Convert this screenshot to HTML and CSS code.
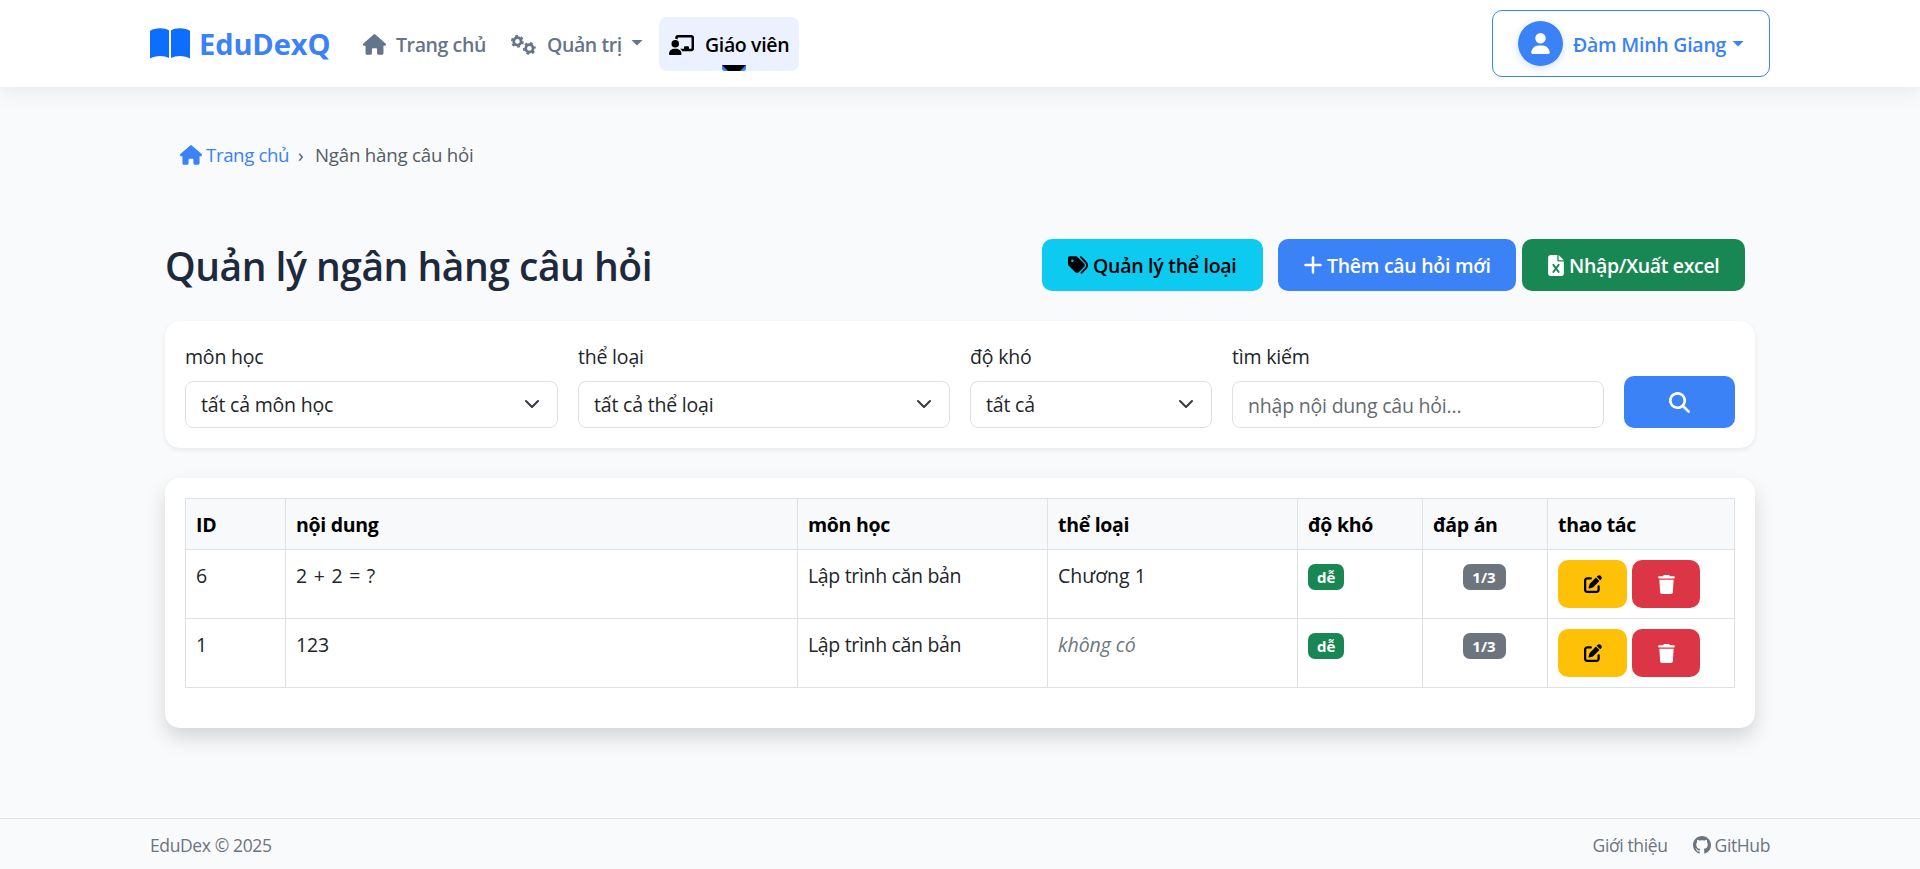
FILE: index.html
```
<!DOCTYPE html>
<html lang="vi">
<head>
<meta charset="utf-8">
<title>EduDexQ</title>
<link rel="stylesheet" href="styles.css">
</head>
<body>
<svg class="defs" aria-hidden="true">
  <symbol id="house" viewBox="0 0 576 512"><path d="M575.8 255.5c0 18-15 32.1-32 32.1h-32l.7 160.2c0 2.7-.2 5.4-.5 8.1V472c0 22.1-17.9 40-40 40H456c-1.1 0-2.2 0-3.3-.1c-1.4 .1-2.8 .1-4.2 .1H416 392c-22.1 0-40-17.9-40-40V448 384c0-17.7-14.3-32-32-32H256c-17.7 0-32 14.3-32 32v64 24c0 22.1-17.9 40-40 40H160 128.1c-1.5 0-3-.1-4.5-.2c-1.2 .1-2.4 .2-3.6 .2H104c-22.1 0-40-17.9-40-40V360c0-.9 0-1.9 .1-2.8V287.6H32c-18 0-32-14-32-32.1c0-9 3-17 10-24L266.4 8c7-7 15-8 22-8s15 2 21 7L564.8 231.5c8 7 12 15 11 24z"/></symbol>
  <symbol id="pen" viewBox="0 0 512 512"><path d="M471.6 21.7c-21.9-21.9-57.3-21.9-79.2 0L362.3 51.7l97.9 97.9 30.1-30.1c21.9-21.9 21.9-57.3 0-79.2L471.6 21.7zm-299.2 220c-6.1 6.1-10.8 13.6-13.5 21.9l-29.6 88.8c-2.9 8.6-.6 18.1 5.8 24.6s15.9 8.7 24.6 5.8l88.8-29.6c8.2-2.7 15.7-7.4 21.9-13.5L437.7 172.3 339.7 74.3 172.4 241.7zM96 64C43 64 0 107 0 160V416c0 53 43 96 96 96H352c53 0 96-43 96-96V320c0-17.7-14.3-32-32-32s-32 14.3-32 32v96c0 17.7-14.3 32-32 32H96c-17.7 0-32-14.3-32-32V160c0-17.7 14.3-32 32-32h96c17.7 0 32-14.3 32-32s-14.3-32-32-32H96z"/></symbol>
  <symbol id="trash" viewBox="0 0 448 512"><path d="M135.2 17.7L128 32H32C14.3 32 0 46.3 0 64S14.3 96 32 96H416c17.7 0 32-14.3 32-32s-14.3-32-32-32H320l-7.2-14.3C307.4 6.8 296.3 0 284.2 0H163.8c-12.1 0-23.2 6.8-28.6 17.7zM416 128H32L53.2 467c1.6 25.3 22.6 45 47.9 45H346.9c25.3 0 46.3-19.7 47.9-45L416 128z"/></symbol>
</svg>

<header class="navbar">
  <div class="container navbar-row">
    <a class="brand">
      <svg class="brand-icon" viewBox="0 0 40 31"><path d="M0 3C4-.6 15-.8 19 2.5V30C14 27 5 27.200 0 30.500ZM21 2.500C25-.8 36-.6 40 3V30.500C35 27.200 26 27 21 30Z"/></svg>
      <span>EduDexQ</span>
    </a>
    <nav class="nav">
      <a class="nav-link"><svg class="ico ico-house"><use href="#house"/></svg><span class="w-home">Trang chủ</span></a>
      <a class="nav-link nav-admin">
        <svg class="ico-gears" viewBox="0 0 25 20">
          <g fill="none" stroke="currentColor"><circle cx="6.400" cy="6.400" r="3.700" stroke-width="2.700"/><circle cx="6.400" cy="6.400" r="5.600" stroke-width="1.700" stroke-dasharray="2.900 2.960"/><circle cx="18.400" cy="13.400" r="3.700" stroke-width="2.700"/><circle cx="18.400" cy="13.400" r="5.600" stroke-width="1.700" stroke-dasharray="2.900 2.960" stroke-dashoffset="2.900"/></g>
        </svg>
        <span class="w-admin">Quản trị</span><i class="caret"></i>
      </a>
      <a class="nav-link active">
        <svg class="ico-board" viewBox="0 0 640 512"><path d="M160 64c0-35.300 28.700-64 64-64H576c35.300 0 64 28.700 64 64V352c0 35.300-28.700 64-64 64H336.800c-11.800-25.500-29.900-47.500-52.400-64H384V320c0-17.700 14.300-32 32-32h64c17.700 0 32 14.300 32 32v32h64V64L224 64v49.100C205.200 102.200 183.300 96 160 96V64zm0 64a96 96 0 1 1 0 192 96 96 0 1 1 0-192zM133.300 352h53.300C260.300 352 320 411.700 320 485.300c0 14.700-11.900 26.700-26.700 26.700H26.700C11.900 512 0 500.100 0 485.300C0 411.700 59.700 352 133.300 352z"/></svg>
        <span>Giáo viên</span>
        <svg class="marker" viewBox="0 0 24 6"><path class="marker-bar" d="M0 0H24V3A3 3 0 0 1 21 6H3A3 3 0 0 1 0 3Z"/><path d="M0 0H24L18 6H6Z"/></svg>
      </a>
    </nav>
    <button class="user">
      <span class="avatar"><svg viewBox="0 0 448 512"><path d="M224 256A128 128 0 1 0 224 0a128 128 0 1 0 0 256zm-45.700 48C79.800 304 0 383.800 0 482.300C0 498.700 13.300 512 29.700 512H418.300c16.400 0 29.700-13.300 29.700-29.700C448 383.800 368.200 304 269.700 304H178.300z"/></svg></span>
      <span>Đàm Minh Giang</span><i class="caret"></i>
    </button>
  </div>
</header>

<main class="container main">
  <nav class="breadcrumb">
    <a><svg class="ico"><use href="#house"/></svg><span class="crumb-home">Trang chủ</span></a>
    <span class="sep">›</span>
    <span>Ngân hàng câu hỏi</span>
  </nav>

  <div class="heading">
    <h1>Quản lý ngân hàng câu hỏi</h1>
    <div class="actions">
      <button class="btn btn-info">
        <svg class="ico-tags" viewBox="0 0 512 512"><path d="M345 39.100L472.800 168.400c52.400 53 52.400 138.200 0 191.200L360.800 472.900c-9.300 9.400-24.500 9.500-33.900 .2s-9.500-24.500-.2-33.900L438.600 325.900c33.900-34.300 33.900-89.400 0-123.700L310.900 72.900c-9.300-9.400-9.200-24.600 .2-33.900s24.600-9.200 33.900 .2zM0 229.500V80C0 53.500 21.500 32 48 32H197.500c17 0 33.300 6.700 45.300 18.700l168 168c25 25 25 65.500 0 90.500L277.300 442.700c-25 25-65.500 25-90.500 0l-168-168C6.700 262.700 0 246.500 0 229.500zM144 144a32 32 0 1 0-64 0 32 32 0 1 0 64 0z"/></svg>
        <span>Quản lý thể loại</span></button>
      <button class="btn btn-primary">
        <svg class="ico-plus" viewBox="0 0 18 18"><path d="M9 1.500V16.500M1.500 9H16.500"/></svg>
        <span>Thêm câu hỏi mới</span></button>
      <button class="btn btn-success">
        <svg class="ico-excel" viewBox="0 0 384 512"><path d="M64 0C28.700 0 0 28.700 0 64V448c0 35.300 28.700 64 64 64H320c35.300 0 64-28.700 64-64V160H256c-17.700 0-32-14.300-32-32V0H64zM256 0V128H384L256 0z"/><path class="excel-cross" d="M128 240L256 416M256 240L128 416"/></svg>
        <span>Nhập/Xuất excel</span></button>
    </div>
  </div>

  <form class="card filters">
    <label class="field"><span>môn học</span><span class="control">tất cả môn học<svg class="chev" viewBox="0 0 16 16"><path d="m2 5 6 6 6-6"/></svg></span></label>
    <label class="field"><span>thể loại</span><span class="control">tất cả thể loại<svg class="chev" viewBox="0 0 16 16"><path d="m2 5 6 6 6-6"/></svg></span></label>
    <label class="field"><span>độ khó</span><span class="control">tất cả<svg class="chev" viewBox="0 0 16 16"><path d="m2 5 6 6 6-6"/></svg></span></label>
    <label class="field"><span>tìm kiếm</span><input class="control" placeholder="nhập nội dung câu hỏi..."></label>
    <button type="button" class="btn btn-primary btn-search"><svg viewBox="0 0 512 512"><path d="M416 208c0 45.900-14.900 88.300-40 122.700L502.600 457.400c12.500 12.500 12.500 32.800 0 45.300s-32.800 12.500-45.300 0L330.700 376c-34.400 25.200-76.800 40-122.700 40C93.100 416 0 322.900 0 208S93.100 0 208 0S416 93.100 416 208zM208 352a144 144 0 1 0 0-288 144 144 0 1 0 0 288z"/></svg></button>
  </form>

  <section class="card list">
    <table>
      <colgroup><col class="c-id"><col class="c-text"><col class="c-subject"><col class="c-subject"><col class="c-small"><col class="c-small"><col class="c-act"></colgroup>
      <thead><tr><th>ID</th><th>nội dung</th><th>môn học</th><th>thể loại</th><th>độ khó</th><th>đáp án</th><th>thao tác</th></tr></thead>
      <tbody>
        <tr><td>6</td><td class="sum">2 + 2 = ?</td><td>Lập trình căn bản</td><td class="chapter">Chương 1</td><td><span class="badge easy">dễ</span></td><td class="center"><span class="badge count">1/3</span></td>
          <td><div class="row-actions"><button class="edit"><svg><use href="#pen"/></svg></button><button class="delete"><svg><use href="#trash"/></svg></button></div></td></tr>
        <tr><td>1</td><td class="digits">123</td><td>Lập trình căn bản</td><td><em>không có</em></td><td><span class="badge easy">dễ</span></td><td class="center"><span class="badge count">1/3</span></td>
          <td><div class="row-actions"><button class="edit"><svg><use href="#pen"/></svg></button><button class="delete"><svg><use href="#trash"/></svg></button></div></td></tr>
      </tbody>
    </table>
  </section>
</main>

<footer class="footer">
  <div class="container footer-row">
    <span>EduDex © 2025</span>
    <span class="footer-links"><a>Giới thiệu</a><a class="github"><svg viewBox="0 0 16 16"><path d="M8 0C3.580 0 0 3.580 0 8c0 3.540 2.290 6.530 5.470 7.590.4.070.55-.17.55-.38 0-.19-.01-.82-.01-1.490-2.010.37-2.530-.49-2.690-.94-.09-.23-.48-.94-.82-1.130-.28-.15-.68-.52-.01-.53.63-.01 1.080.58 1.230.82.72 1.210 1.870.87 2.330.66.070-.52.28-.87.51-1.070-1.780-.2-3.640-.89-3.640-3.950 0-.87.31-1.590.82-2.150-.08-.2-.36-1.020.08-2.120 0 0 .67-.21 2.200.82.64-.18 1.320-.27 2-.27s1.360.09 2 .27c1.530-1.040 2.200-.82 2.200-.82.44 1.100.16 1.920.08 2.120.51.56.82 1.270.82 2.150 0 3.070-1.870 3.750-3.650 3.950.29.25.54.73.54 1.480 0 1.070-.01 1.930-.01 2.200 0 .21.15.46.55.38A8.010 8.010 0 0 0 16 8c0-4.420-3.580-8-8-8z"/></svg>GitHub</a></span>
  </div>
</footer>
</body>
</html>
```
FILE: styles.css
```
* { box-sizing: border-box; }
body {
  margin: 0;
  height: 869px;
  display: flex;
  flex-direction: column;
  background: #f9fafc;
  color: #212529;
  font: 19.5px/30px "Open Sans", "Noto Sans", sans-serif;
  letter-spacing: -0.2px;
}
svg { display: block; flex: none; fill: currentColor; }
button { font: inherit; letter-spacing: inherit; border: 0; padding: 0; }
.defs { position: absolute; width: 0; height: 0; }
.container { width: 1620px; margin: 0 auto; }

/* Navbar */
.navbar { height: 87px; flex: none; background: #fff; box-shadow: 0 4px 20px rgba(0, 0, 0, .08); }
.navbar-row { display: flex; height: 87px; align-items: center; white-space: nowrap; }
.brand { display: flex; align-items: center; width: 203px; color: #3b82f6; font-size: 29px; font-weight: 700; letter-spacing: -.1px; line-height: 45px; }
.brand span { margin: 0 0 0 9px; }
.brand-icon { width: 40px; height: 31px; color: #0d6efd; }
.nav { display: flex; gap: 6px; }
.nav-link { position: relative; display: flex; align-items: center; height: 54px; padding: 3px 10px 0; border-radius: 8px; color: #64748b; font-weight: 600; letter-spacing: -.35px; }
.ico { width: 22px; height: 20px; }
.ico-house { width: 23px; height: 21px; margin: -2px 10px 0 0; }
.w-home { width: 89px; letter-spacing: -.4px; }
.nav-admin { width: 152px; }
.ico-gears { width: 25px; height: 20px; margin: 0 11px 0 0; }
.w-admin { width: 73px; letter-spacing: -.4px; }
.caret { width: 12px; height: 6px; margin: -5px 0 0 11px; background: currentColor; clip-path: polygon(0 0, 100% 0, 50% 100%); }
.active { width: 140px; background: #ebf1fe; color: #000; }
.ico-board { width: 25px; height: 20px; margin: 0 11px 0 0; }
.marker { position: absolute; left: 63px; bottom: 0; width: 24px; height: 6px; }
.marker-bar { fill: #3b82f6; }
.user { display: flex; align-items: center; width: 278px; height: 67px; margin-left: auto; padding-left: 25px; border: 1px solid #3b82f6; border-radius: 10px; background: #fff; color: #3b82f6; font-weight: 600; letter-spacing: -.25px; }
.user > span:nth-child(2) { margin: 3px 0 0 10px; }
.user .caret { margin: 0 0 0 6px; }
.avatar { display: flex; align-items: center; justify-content: center; width: 45px; height: 45px; border-radius: 50%; background: #3b82f6; color: #fff; box-shadow: 0 2px 8px rgba(59, 130, 246, .25); }
.avatar svg { width: 19px; height: 21px; }

/* Page heading */
.main { padding: 0 15px; flex: 1; }
.breadcrumb { display: flex; align-items: center; height: 30px; margin: 53px 0 68px 15px; font-size: 18.7px; letter-spacing: -.22px; color: #555c64; white-space: nowrap; }
.breadcrumb a { display: flex; align-items: center; gap: 4px; color: #3b82f6; }
.crumb-home { width: 82px; letter-spacing: -.4px; }
.breadcrumb .sep { width: 27px; padding-left: 10px; }
.heading { display: flex; justify-content: space-between; height: 54px; margin-bottom: 29px; }
h1 { margin: 4px 0 0; color: #1e293b; font-size: 39px; line-height: 48px; font-weight: 600; letter-spacing: -.48px; white-space: nowrap; }
.actions { display: flex; height: 52px; margin: 1px 10px 0 0; }
.btn { display: flex; align-items: center; height: 52px; padding: 2px 0 0 26px; border-radius: 10px; font-weight: 600; letter-spacing: -.28px; white-space: nowrap; }
.btn-info { width: 221px; margin-right: 15px; background: #0dcaf0; color: #000; }
.btn-primary { width: 238px; margin-right: 6px; background: #3b82f6; color: #fff; }
.btn-success { width: 223px; background: #198754; color: #fff; letter-spacing: -.35px; }
.ico-tags { width: 20px; height: 20px; margin: -2px 5px 0 0; }
.ico-plus { width: 18px; height: 18px; margin: -2px 5px 0 0; stroke: currentColor; stroke-width: 2.500; stroke-linecap: round; }
.ico-excel { width: 16px; height: 21px; margin: -2px 5px 0 0; }
.excel-cross { stroke: #198754; stroke-width: 46; stroke-linecap: round; }

/* Cards */
.card { background: #fff; border-radius: 15px; }
.filters { display: grid; grid-template-columns: 373px 372px 242px 372px 111px; gap: 20px; height: 127px; padding: 20px; align-items: end; box-shadow: 0 2px 5px rgba(0, 0, 0, .075); }
.field { display: flex; flex-direction: column; gap: 9px; padding-top: 1px; }
.control { display: flex; align-items: center; justify-content: space-between; width: 100%; height: 47px; padding: 1px 17px 0 15px; border: 1px solid #dee2e6; border-radius: 8px; background: #fff; color: #212529; font: inherit; letter-spacing: -.2px; }
.control::placeholder { color: #646a70; opacity: 1; }
.chev { width: 16px; height: 16px; margin-top: -2px; fill: none; stroke: #343a40; stroke-width: 2; stroke-linecap: round; stroke-linejoin: round; }
.btn-search { width: 111px; margin: 0; padding: 0; justify-content: center; }
.btn-search svg { width: 21px; height: 21px; }
.list { height: 250px; margin-top: 30px; padding: 20px; box-shadow: 0 10px 20px rgba(0, 0, 0, .15); }

/* Table */
table { width: 1550px; table-layout: fixed; border-collapse: collapse; }
th, td { border: 1px solid #dee2e6; padding: 11px 10px 8px 10px; text-align: left; vertical-align: top; }
th { height: 51px; background: #f8f9fa; color: #000; font-weight: 700; letter-spacing: -.3px; }
td { height: 69px; }
td:nth-child(3) { letter-spacing: -.33px; }
.c-id { width: 100px; }
.c-text { width: 512px; }
.c-subject { width: 250px; }
.c-small { width: 125px; }
.c-act { width: 187px; }
.sum { letter-spacing: .75px; }
.digits { letter-spacing: -.1px; }
.chapter { letter-spacing: 0; }
em { color: #6c757d; letter-spacing: -.05px; }
.center { text-align: center; padding-right: 12px; }
.badge { display: inline-block; height: 26px; padding: 1px 9px 0; margin-top: 3px; border-radius: 7px; font-size: 15px; line-height: 25px; font-weight: 700; color: #fff; letter-spacing: 0; vertical-align: top; }
.easy { width: 36px; background: #198754; }
.count { width: 43px; padding: 1px 0 0; text-align: center; background: #6c757d; }
.row-actions { display: flex; gap: 5px; margin-top: -1px; }
.row-actions button { display: flex; align-items: center; justify-content: center; height: 48px; border-radius: 10px; }
.edit { width: 69px; background: #ffc107; color: #000; }
.delete { width: 68px; background: #dc3545; color: #fff; }
.edit svg { width: 18px; height: 18px; }
.delete svg { width: 17px; height: 19px; }

/* Footer */
.footer { height: 51px; flex: none; border-top: 1px solid #dee2e6; color: #6c757d; font-size: 17.5px; letter-spacing: -.38px; }
.footer-row { display: flex; justify-content: space-between; padding-top: 11px; }
.footer-links { display: flex; gap: 25px; }
.github { display: flex; align-items: center; gap: 4px; }
.github svg { width: 18px; height: 18px; }
```
